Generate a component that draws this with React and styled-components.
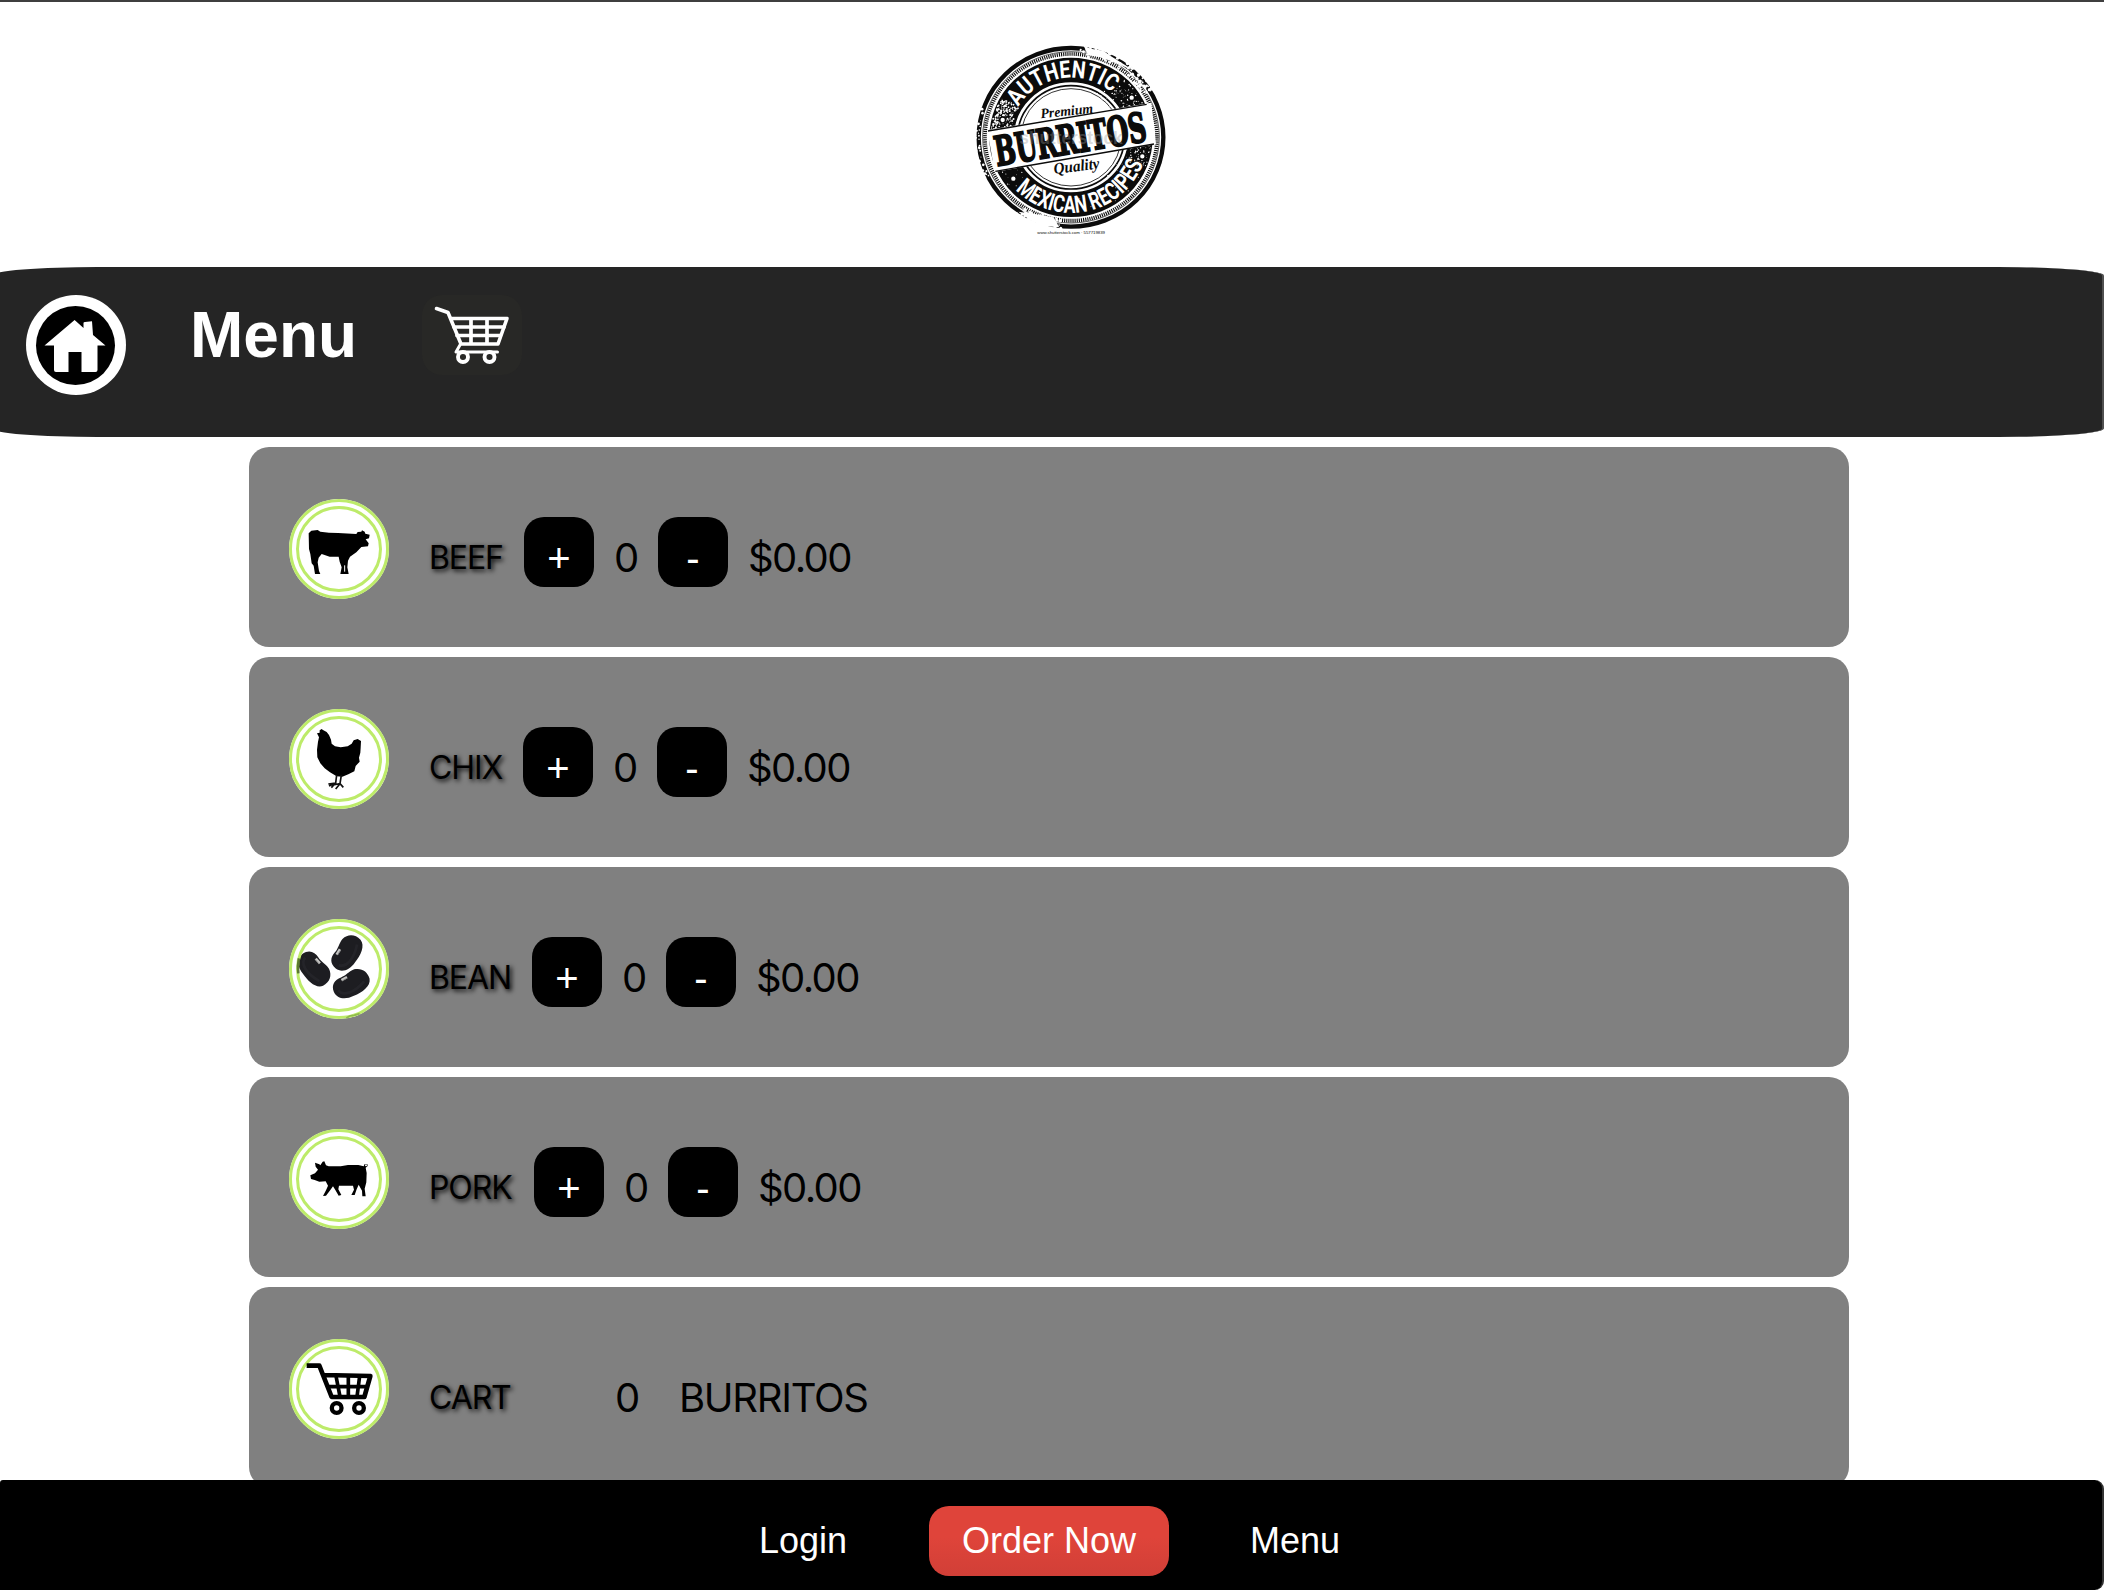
import React from "react";
import styled, { createGlobalStyle } from "styled-components";

const GlobalStyle = createGlobalStyle`
  * { box-sizing: border-box; }
  body { margin: 0; background: #fff; overflow: hidden; }
`;

const Page = styled.div`
  display: flex;
  flex-direction: column;
  height: 1590px;
  overflow: hidden;
  background: #fff;
  border-top: 2px solid #3f3f3f;
  font-family: Inter, "Liberation Sans", sans-serif;
  color: #000;
`;

const Header = styled.header`
  flex: none;
  height: 265px;
  padding: 28px 0 0 960px;
  svg { display: block; }
`;

const NavBar = styled.nav`
  flex: none;
  display: flex;
  align-items: flex-start;
  width: 2112px;
  height: 170px;
  margin-left: -8px;
  padding: 28px 0 0 34px;
  background: #252525;
  border-right: 2px solid #505050;
  border-radius: 5%;
`;

const NavTitle = styled.h1`
  margin: 4px 0 0 64px;
  width: 232px;
  font: 700 64px/72px "Liberation Sans", Arial, sans-serif;
  color: #fff;
`;

const NavCart = styled.div`
  width: 100px;
  height: 80px;
  border-radius: 20px;
  background: #282826;
`;

const List = styled.main`
  flex: 1;
  min-height: 0;
  overflow: hidden;
  display: flex;
  flex-direction: column;
  gap: 10px;
  padding-top: 10px;
  margin-left: 249px;
  width: 1600px;
`;

const Card = styled.section`
  flex: none;
  display: flex;
  align-items: flex-start;
  height: 200px;
  padding: 52px 0 0 40px;
  border-radius: 20px;
  background: #808080;
`;

const Label = styled.span`
  width: ${(p) => p.$w}px;
  margin: 39px 20px 0 40px;
  font-size: 32px;
  line-height: 40px;
  letter-spacing: -1.1px;
  white-space: nowrap;
  text-shadow: 2px 2px 5px #000;
`;

const Step = styled.button`
  flex: none;
  width: 70px;
  height: 70px;
  margin-top: 18px;
  padding: 12px 0 0;
  border: 0;
  border-radius: 20px;
  background: #000;
  color: #fff;
  font: 400 40px/40px "Liberation Sans", Arial, sans-serif;
`;

const Count = styled.span`
  width: 24px;
  margin: 34px 20px 0;
  font-size: 40px;
  line-height: 50px;
  text-indent: -1px;
  letter-spacing: -2px;
  text-align: center;
  white-space: nowrap;
`;

const Amount = styled.span`
  margin: 34px 0 0 ${(p) => p.$gap}px;
  font-size: 40px;
  line-height: 50px;
  letter-spacing: ${(p) => p.$ls}px;
  white-space: nowrap;
`;

const Footer = styled.footer`
  flex: none;
  display: flex;
  align-items: flex-start;
  height: 110px;
  padding: 26px 0 0 759px;
  background: #000;
  border-right: 2px solid #333;
  border-radius: 3px 9px 9px 0;
  font-family: "Liberation Sans", Arial, sans-serif;
`;

const FooterLink = styled.a`
  width: ${(p) => p.$w}px;
  font-size: 36px;
  line-height: 70px;
  color: #fff;
`;

const OrderButton = styled.button`
  width: 240px;
  height: 70px;
  margin-right: 81px;
  padding: 0;
  border: 0;
  border-radius: 20px;
  background: linear-gradient(#df443a 45%, #d13f37);
  color: #fff;
  font: 400 36px/70px "Liberation Sans", Arial, sans-serif;
`;

const Round = styled.svg`
  flex: none;
  display: block;
`;

const Badge = ({ children, above }) => (
  <Round width="100" height="100" viewBox="0 0 300 300">
    <circle cx="150" cy="150" r="150" fill="#fff" />
    {above}
    <circle cx="150" cy="150" r="145.5" fill="none" stroke="#bdeb69" strokeWidth="9" />
    <circle cx="150" cy="150" r="124.5" fill="none" stroke="#bdeb69" strokeWidth="9" />
    {children}
  </Round>
);

const Beef = () => (
  <Badge>
    <path d="M59 103 67 95 86 93 94 98 120 101 147 102 202 105 206 99 217 98 219 94 227 98 229 104 242 107 240 118 230 121 239 133 237 142 217 144 202 160 183 173 177 185 175 205 179 225 154 225 158 205 152 188 149 173 122 173 98 165 89 176 86 190 90 216 94 225 78 225 74 200 68 193 64 165 60 150Z" />
    <path d="M167 199V218" stroke="#fff" strokeWidth="3" />
  </Badge>
);

const Chicken = () => (
  <Badge>
    <path d="M84 73 92 71 92 64 98 60 102 63 113 69 120 78 126 92 128 104 138 112 155 115 176 112 188 104 194 94 206 90 216 96 215 116 214 131 210 146 212 158 200 171 196 187 178 196 160 203 143 202 123 190 107 178 94 163 85 145 84 122 87 98 90 85Z" />
    <path d="M143 198 140 222 118 225M140 222 120 231M140 222 127 236M157 198 153 224 133 228M153 224 140 240M153 224 163 235" fill="none" stroke="#111" strokeWidth="5" />
  </Badge>
);

const Bean = ({ at }) => (
  <g transform={at}>
    <path d="M-57-3C-54-26-37-35-17-31C-2-28 10-35 29-33C51-27 61-8 56 14C48 36 17 39-10 36C-38 35-59 20-57-3Z" fill="#1d1d21" />
    <path d="M-43-1C-40 22-5 29 38 13" fill="none" stroke="#34343a" strokeWidth="8" opacity=".35" />
    <path d="M-20-23-1-23" stroke="#c5c5c3" strokeWidth="8" />
    <path d="M-19-20-3-20" stroke="#717170" strokeWidth="2" />
  </g>
);

const Beans = () => (
  <Badge
    above={
      <>
        <Bean at="translate(173 102) rotate(-58)" />
        <Bean at="translate(76 149) rotate(49)" />
        <Bean at="translate(186 194) rotate(-29)" />
      </>
    }
  >
    <path d="M30 118A125 125 0 0 0 28 163" fill="none" stroke="#283b16" strokeWidth="8" opacity=".65" />
    <path d="M172 297 182 291 195 289 212 284" fill="none" stroke="#8fb94c" strokeWidth="5" />
  </Badge>
);

const Pig = () => (
  <Badge>
    <path d="M64 139 78 133 87 122 80 113 78 101 91 106 94 109 101 98 106 97 111 109 119 112 155 112 177 108 208 108 224 112 227 105 235 105 236 111 230 116 233 132 232 160 227 179 230 202 220 202 219 185 209 167 203 181 197 198 187 198 195 182 192 170 150 170 148 181 157 198 149 200 139 183 132 172 124 183 111 200 102 201 111 184 117 170 110 157 91 158 77 153 66 150Z" />
    <circle cx="231" cy="109" r="3" fill="#fff" />
  </Badge>
);

const Cart = () => (
  <Badge>
    <g fill="none" stroke="#000" strokeLinejoin="round">
      <path d="M53 80H91L128 174H226L244 111 104 108" strokeWidth="14" />
      <path d="M141 111 153 173M178 111V173M212 111 204 173M116 143H237" strokeWidth="11" />
      <circle cx="143" cy="207" r="14.5" strokeWidth="13" />
      <circle cx="210" cy="207" r="14.5" strokeWidth="13" />
    </g>
  </Badge>
);

const HomeIcon = () => (
  <Round width="100" height="100" viewBox="0 0 100 100">
    <circle cx="50" cy="50" r="50" fill="#fff" />
    <circle cx="49.5" cy="50.5" r="39.5" fill="#000" />
    <path d="M48.6 25 57.5 33V28Q57.5 27 59 27L66 26.3 67 40 79.5 50.5H71.5V75Q71.5 77 69.5 77H55.5V57H42.5V77H30Q28 77 28 75V50.5H18.5Z" fill="#fff" />
  </Round>
);

const NavCartIcon = () => (
  <Round width="100" height="80" viewBox="0 0 100 80">
    <g fill="none" stroke="#fff" strokeLinecap="round" strokeLinejoin="round">
      <path d="M14.5 13.5 26 17.5 39 49H76L85 23.5H30" strokeWidth="3.6" />
      <path d="M49 24V48M65 24V48M32 32H82M35 40.5H78" strokeWidth="3.7" />
      <path d="M38 50 34 57H75.5" strokeWidth="3" />
      <circle cx="41" cy="62" r="5" strokeWidth="3.9" />
      <circle cx="67.5" cy="62" r="5" strokeWidth="3.9" />
    </g>
  </Round>
);

let seed = 7;
const rnd = () => {
  seed = (seed * 16807) % 2147483647;
  return seed / 2147483647;
};
const speck = (count, from, to, r0, r1, size) =>
  Array.from({ length: count }, () => {
    const a = ((from + rnd() * (to - from)) * Math.PI) / 180;
    const r = r0 + rnd() * (r1 - r0);
    return [333 + Math.cos(a) * r * 1.03, 322 + Math.sin(a) * r, size * (0.4 + rnd())];
  });
const specks = [
  ...speck(230, 186, 211, 176, 234, 2.2),
  ...speck(90, 312, 338, 176, 234, 1.7),
  ...speck(120, 356, 384, 176, 234, 1.7),
  ...speck(70, 20, 160, 176, 234, 1.4),
  ...speck(90, 276, 330, 245, 280, 3.6),
  ...speck(60, 95, 125, 245, 280, 3.8),
  ...speck(45, 150, 200, 266, 284, 3.2),
  ...speck(60, 300, 410, 145, 172, 1.8),
];

const Logo = () => (
  <svg width="220" height="215" viewBox="0 0 660 645">
    <defs>
      <path id="arcTop" d="M149 322A184 179 0 0 1 517 322" />
      <path id="arcBottom" d="M102 322A231 227 0 0 0 564 322" />
    </defs>
    <g fill="none" stroke="#0b0b0b">
      <ellipse cx="333" cy="322" rx="277" ry="268" strokeWidth="13" />
      <ellipse cx="333" cy="322" rx="258" ry="250" strokeWidth="11" strokeDasharray="3.4 3" />
      <ellipse cx="333" cy="322" rx="265" ry="257" strokeWidth="2" />
      <ellipse cx="333" cy="322" rx="208" ry="202" strokeWidth="74" />
      <ellipse cx="333" cy="322" rx="160" ry="155" strokeWidth="5" />
      <ellipse cx="333" cy="322" rx="150" ry="146" strokeWidth="2.5" />
    </g>
    <g fill="#fff">
      {specks.map(([x, y, r], i) => (
        <circle key={i} cx={x.toFixed(1)} cy={y.toFixed(1)} r={r.toFixed(1)} />
      ))}
      <path d="M370 46 392 56 430 62 452 78 500 108 520 128 508 118 470 98 420 82 385 76Z" />
      <path d="M175 545 225 552 280 562 298 592 250 588 215 574Z" />
    </g>
    <path d="M82 300 574 218 588 343 104 426Z" fill="#fff" />
    <path d="M84 303 560 223M106 424 582 342" stroke="#0b0b0b" strokeWidth="4" />
    <g fill="#fff" stroke="#0b0b0b" strokeWidth="6" paintOrder="stroke" fontFamily="Roboto, sans-serif" fontWeight="700">
      <text fontSize="72">
        <textPath href="#arcTop" startOffset="96" textLength="322" lengthAdjust="spacingAndGlyphs">AUTHENTIC</textPath>
      </text>
      <text fontSize="72">
        <textPath href="#arcBottom" startOffset="174" textLength="464" lengthAdjust="spacingAndGlyphs">MEXICAN RECIPES</textPath>
      </text>
    </g>
    {[[128, 270], [515, 203], [160, 446], [547, 379]].map(([x, y]) => (
      <circle key={x} cx={x} cy={y} r="9" fill="#fff" stroke="#0b0b0b" strokeWidth="5" />
    ))}
    <g fill="#0b0b0b">
      <text transform="translate(111 408) rotate(-9.5)" fontFamily="DejaVu Serif, serif" fontWeight="700" fontSize="122" textLength="460" lengthAdjust="spacingAndGlyphs" stroke="#0b0b0b" strokeWidth="6">BURRITOS</text>
      <g fontFamily="Liberation Serif, serif" fontStyle="italic" fontWeight="700">
        <text transform="translate(243 265) rotate(-6)" fontSize="42" textLength="158" lengthAdjust="spacingAndGlyphs">Premium</text>
        <text transform="translate(283 432) rotate(-7)" fontSize="48" textLength="138" lengthAdjust="spacingAndGlyphs">Quality</text>
      </g>
      <text x="232" y="612" fontFamily="Liberation Sans, sans-serif" fontSize="13" textLength="203">www.shutterstock.com · 557719839</text>
    </g>
    <text x="178" y="342" fontFamily="Liberation Sans, sans-serif" fontWeight="700" fontSize="56" textLength="310" lengthAdjust="spacingAndGlyphs" fill="#999" opacity=".35">shutterstock</text>
  </svg>
);

const items = [
  { name: "BEEF", Icon: Beef, w: 75 },
  { name: "CHIX", Icon: Chicken, w: 74 },
  { name: "BEAN", Icon: Beans, w: 83 },
  { name: "PORK", Icon: Pig, w: 85 },
];

export default function App() {
  return (
    <Page>
      <GlobalStyle />
      <Header>
        <Logo />
      </Header>
      <NavBar>
        <HomeIcon />
        <NavTitle>Menu</NavTitle>
        <NavCart>
          <NavCartIcon />
        </NavCart>
      </NavBar>
      <List>
        {items.map(({ name, Icon, w }) => (
          <Card key={name}>
            <Icon />
            <Label $w={w}>{name}</Label>
            <Step>+</Step>
            <Count>0</Count>
            <Step>-</Step>
            <Amount $gap={20} $ls={-1.6}>$0.00</Amount>
          </Card>
        ))}
        <Card>
          <Cart />
          <Label $w={146}>CART</Label>
          <Count>0</Count>
          <Amount $gap={20} $ls={-1.3}>BURRITOS</Amount>
        </Card>
      </List>
      <Footer>
        <FooterLink $w={170}>Login</FooterLink>
        <OrderButton>Order Now</OrderButton>
        <FooterLink $w={100}>Menu</FooterLink>
      </Footer>
    </Page>
  );
}
